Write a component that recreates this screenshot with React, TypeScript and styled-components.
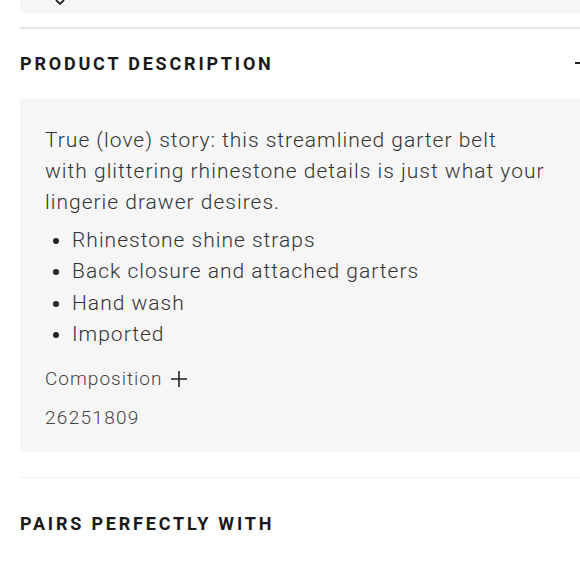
import styled, { createGlobalStyle } from "styled-components";

const GlobalStyle = createGlobalStyle`
  body {
    margin: 0;
    background: #ffffff;
    overflow: hidden;
    font-family: Roboto, "Liberation Sans", sans-serif;
  }
`;

const Page = styled.div`
  width: 580px;
  padding-left: 20px;
  display: flex;
  flex-direction: column;
`;

const TopPanel = styled.div`
  height: 40px;
  margin-top: -27px;
  background: #f6f6f6;
  border-radius: 0 0 0 4px;
  position: relative;
`;

const Chevron = styled.svg`
  position: absolute;
  left: 35px;
  bottom: 8px;
`;

const Divider = styled.hr<{ $thick?: boolean }>`
  border: none;
  margin: ${p => (p.$thick ? "14px 0 0" : "25px 0 0")};
  height: ${p => (p.$thick ? "2px" : "1px")};
  background: ${p => (p.$thick ? "#e4e4e2" : "#efefef")};
`;

const SectionHeader = styled.div<{ $spaced?: boolean }>`
  height: 70px;
  padding-top: ${p => (p.$spaced ? "10px" : "0")};
  margin-top: ${p => (p.$spaced ? "0" : "-1px")};
  display: flex;
  align-items: center;
  justify-content: space-between;
`;

const Heading = styled.h2`
  margin: 0;
  font-family: Roboto, "Liberation Sans", sans-serif;
  font-weight: 700;
  font-size: 18px;
  letter-spacing: 2.8px;
  color: #1a1a1a;
`;

const Toggle = styled.span`
  width: 14px;
  height: 2px;
  background: #222;
  margin-right: 11px;
`;

const Panel = styled.div`
  margin-top: 1px;
  background: #f6f6f6;
  padding: 26px 25px 19px;
  color: #333;
  font-family: Roboto, "Liberation Sans", sans-serif;
  font-size: 21px;
  font-weight: 300;
  line-height: 31px;
  letter-spacing: 1px;
`;

const Paragraph = styled.p`
  margin: 0;
  max-width: 505px;
`;

const List = styled.ul`
  margin: 7px 0 0;
  padding: 0 0 0 27px;
  list-style: disc;
  li {
    line-height: 31.3px;
  }
  li::marker {
    font-size: 21px;
    color: #222;
  }
`;

const Composition = styled.div`
  margin-top: 13px;
  display: flex;
  align-items: center;
  gap: 8px;
  font-size: 19px;
  color: #444;
`;

const Sku = styled.div`
  margin-top: 8px;
  font-size: 19px;
  letter-spacing: 1.3px;
  color: #444;
`;

export default function App() {
  return (
    <>
      <GlobalStyle />
      <Page>
        <TopPanel>
          <Chevron width="10" height="6" viewBox="0 0 10 6">
            <path d="M1 1 L5 5 L9 1" fill="none" stroke="#222" strokeWidth="1.8" />
          </Chevron>
        </TopPanel>
        <Divider $thick />
        <SectionHeader>
          <Heading>PRODUCT DESCRIPTION</Heading>
          <Toggle />
        </SectionHeader>
        <Panel>
          <Paragraph>
            True (love) story: this streamlined garter belt
            <br />
            with glittering rhinestone details is just what your lingerie drawer desires.
          </Paragraph>
          <List>
            <li>Rhinestone shine straps</li>
            <li>Back closure and attached garters</li>
            <li>Hand wash</li>
            <li>Imported</li>
          </List>
          <Composition>
            Composition
            <svg width="18" height="18" viewBox="0 0 18 18">
              <path d="M9 1 V17 M1 9 H17" stroke="#222" strokeWidth="1.6" />
            </svg>
          </Composition>
          <Sku>26251809</Sku>
        </Panel>
        <Divider />
        <SectionHeader $spaced>
          <Heading>PAIRS PERFECTLY WITH</Heading>
        </SectionHeader>
      </Page>
    </>
  );
}
